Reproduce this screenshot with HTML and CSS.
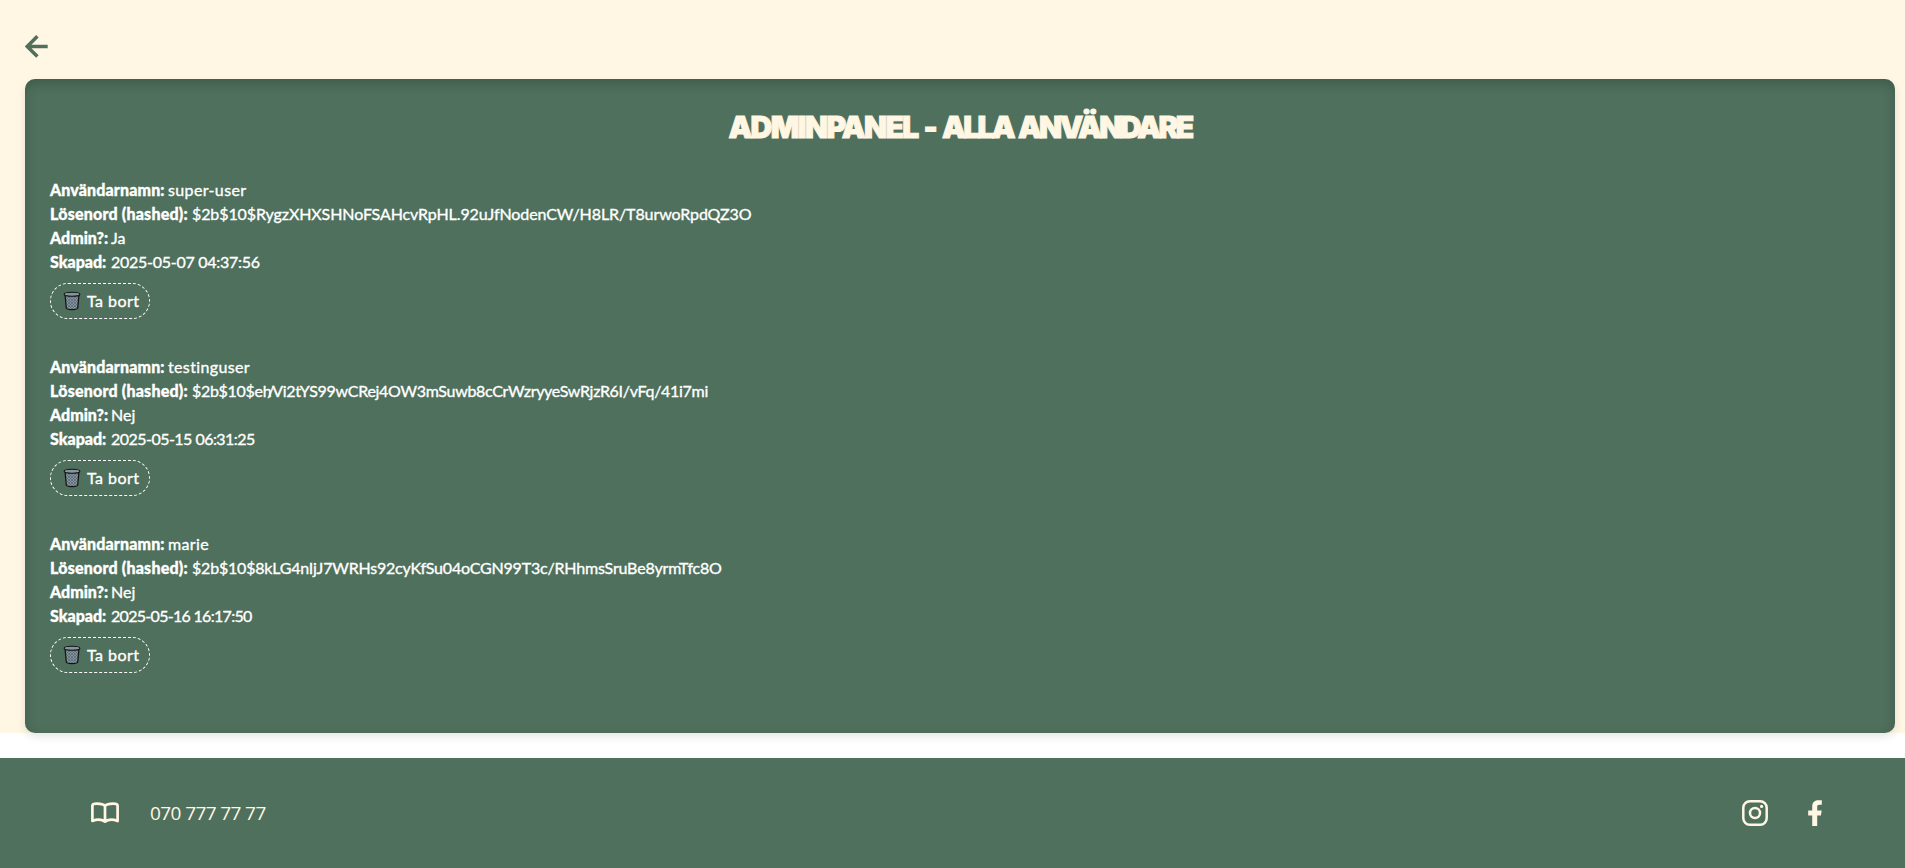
FILE: index.html
```html
<!DOCTYPE html>
<html lang="sv">
<head>
<meta charset="utf-8">
<title>Adminpanel</title>
<link rel="stylesheet" href="styles.css">
</head>
<body>
<main class="page">
  <a class="back" href="#" aria-label="Tillbaka"><svg width="23" height="23" viewBox="0 0 23 23"><path d="M12.4 1.2 2.2 11.4 12.4 21.6M2.5 11.4H22.7" fill="none" stroke="currentColor" stroke-width="3.5"/></svg></a>
  <section class="panel">
    <h1 class="title">Adminpanel - <span class="tight">Alla användare</span></h1>
    <article class="user">
      <p class="row"><strong class="label l-name">Användarnamn:</strong><span class="name">super-user</span></p>
      <p class="row"><strong class="label l-pass">Lösenord (hashed):</strong><span class="hash-1">$2b$10$RygzXHXSHNoFSAHcvRpHL.92uJfNodenCW/H8LR/T8urwoRpdQZ3O</span></p>
      <p class="row"><strong class="label l-admin">Admin?:</strong><span>Ja</span></p>
      <p class="row"><strong class="label l-date">Skapad:</strong><span class="date-1">2025-05-07 04:37:56</span></p>
      <button class="delete"><svg class="bin" width="18" height="20" viewBox="0 0 18 20"><use href="#bin"/></svg><span>Ta bort</span></button>
    </article>
    <article class="user">
      <p class="row"><strong class="label l-name">Användarnamn:</strong><span class="name">testinguser</span></p>
      <p class="row"><strong class="label l-pass">Lösenord (hashed):</strong><span class="hash-2">$2b$10$eh<span class="slash">/</span>Vi2tYS99wCRej4OW3mSuwb8cCrWzryyeSwRjzR6I/vFq/41i7mi</span></p>
      <p class="row"><strong class="label l-admin">Admin?:</strong><span>Nej</span></p>
      <p class="row"><strong class="label l-date">Skapad:</strong><span class="date-2">2025-05-15 06:31:25</span></p>
      <button class="delete"><svg class="bin" width="18" height="20" viewBox="0 0 18 20"><use href="#bin"/></svg><span>Ta bort</span></button>
    </article>
    <article class="user">
      <p class="row"><strong class="label l-name">Användarnamn:</strong><span class="name">marie</span></p>
      <p class="row"><strong class="label l-pass">Lösenord (hashed):</strong><span class="hash-3">$2b$10$8kLG4nIjJ7WRHs92cyKfSu04oCGN99T3c/RHhmsSruBe8yrmTfc8O</span></p>
      <p class="row"><strong class="label l-admin">Admin?:</strong><span>Nej</span></p>
      <p class="row"><strong class="label l-date">Skapad:</strong><span class="date-3">2025-05-16 16:17:50</span></p>
      <button class="delete"><svg class="bin" width="18" height="20" viewBox="0 0 18 20"><use href="#bin"/></svg><span>Ta bort</span></button>
    </article>
  </section>
</main>
<footer class="footer">
  <div class="contact">
    <svg width="30" height="22" viewBox="0 0 30 22"><path d="M15 4C13 1.8 9.5 1.6 7 1.6 4.5 1.6 2.4 2 2.4 3.6V19C6 17.6 11.5 17.2 15 19.6 18.500 17.200 24 17.600 27.600 19V3.600C27.600 2 25.500 1.600 23 1.600 20.500 1.600 17 1.800 15 4ZM15 4V19" fill="none" stroke="currentColor" stroke-width="2.700" stroke-linejoin="round"/></svg>
    <span class="phone">070 777 77 77</span>
  </div>
  <div class="social">
    <svg width="26" height="26" viewBox="0 0 26 26"><rect x="1.300" y="1.300" width="23.400" height="23.400" rx="6.500" fill="none" stroke="currentColor" stroke-width="2.500"/><circle cx="13" cy="13" r="5" fill="none" stroke="currentColor" stroke-width="2.500"/><circle cx="19.600" cy="6.400" r="1.600" fill="currentColor"/></svg>
    <svg width="14" height="26" viewBox="0 0 14 26"><path d="M4.200 26V15.500H.2V10.500H4.200V6.500C4.200 2.500 6.500.2 10.200.2H13.800V4.800H11.400C9.800 4.800 9.200 5.600 9.200 7V10.500H13.700L12.900 15.500H9.200V26Z" fill="currentColor"/></svg>
  </div>
</footer>
<svg class="defs" width="0" height="0">
  <defs>
    <pattern id="mesh" width="3" height="3" patternUnits="userSpaceOnUse"><path d="M0 0 3 3M3 0 0 3" stroke="#4d5c66" stroke-width=".6"/></pattern>
    <g id="bin"><path d="M2 3.500 3.300 17Q3.500 18.600 9 18.600T14.700 17L16 3.500Z" fill="#8495a0"/><path d="M2 3.500 3.300 17Q3.500 18.600 9 18.600T14.700 17L16 3.500Z" fill="url(#mesh)" stroke="#111" stroke-width="1.200"/><ellipse cx="9" cy="3.200" rx="7.900" ry="2" fill="#8495a0" stroke="#111" stroke-width="1.100"/></g>
  </defs>
</svg>
</body>
</html>
```

FILE: styles.css
```css
* { box-sizing: border-box; }
body { margin: 0; background: #fff; font-family: Lato, "Open Sans", sans-serif; }
.page { height: 733px; padding: 35px 10px 0 25px; background: #fff6e3; }
.back { display: block; width: 23px; height: 44px; color: #4f705c; }
.back svg { display: block; }
.panel {
  height: 654px;
  padding: 24px 25px 0;
  border-radius: 10px;
  background: #4f705c;
  color: #fff;
  box-shadow: 0 4px 8px rgba(0, 0, 0, .1), inset 0 4px 12px rgba(0, 0, 0, .2);
}
.title {
  margin: 0 0 27px;
  color: #fff6e3;
  font: 900 30px/48px Inter, sans-serif;
  letter-spacing: -1.6px;
  word-spacing: 1.5px;
  text-align: center;
  text-transform: uppercase;
  white-space: nowrap;
  -webkit-text-stroke: 1px #fff6e3;
}
.tight { letter-spacing: -2.65px; }
.user { margin-bottom: 36px; }
.row { display: flex; gap: 4px; margin: 0; font-size: 16px; line-height: 24px; white-space: nowrap; -webkit-text-stroke: .35px #fff; }
.label { flex: none; font-weight: 900; }
.l-name { width: 114px; letter-spacing: .12px; }
.l-pass { width: 138px; letter-spacing: .2px; }
.l-admin { width: 57px; }
.l-date { width: 57px; }
.name { letter-spacing: .36px; }
.hash-1 { letter-spacing: -.1px; }
.hash-2 { letter-spacing: -.3px; }
.hash-3 { letter-spacing: -.2px; }
.slash { margin: 0 -2px 0 -4px; }
.date-1 { letter-spacing: -.27px; }
.date-2 { letter-spacing: -.53px; }
.date-3 { letter-spacing: -.7px; }
.delete {
  display: flex;
  align-items: center;
  gap: 6px;
  width: 100px;
  height: 36px;
  margin-top: 9px;
  padding: 0 0 0 12px;
  border: 1px dashed #fff;
  border-radius: 18px;
  background: none;
  color: #fff;
  font: 16px/24px Lato, sans-serif;
  letter-spacing: .45px;
  white-space: nowrap;
  -webkit-text-stroke: .35px #fff;
}
.bin { flex: none; }
.footer {
  display: flex;
  align-items: center;
  justify-content: space-between;
  height: 110px;
  margin-top: 25px;
  padding: 0 83px 0 90px;
  background: #4f705c;
  color: #fff6e3;
}
.contact { display: flex; align-items: center; gap: 30px; }
.phone { font: 400 19px/24px "Open Sans", sans-serif; letter-spacing: -.6px; }
.social { display: flex; align-items: center; gap: 40px; }
.defs { display: block; position: absolute; }
```
